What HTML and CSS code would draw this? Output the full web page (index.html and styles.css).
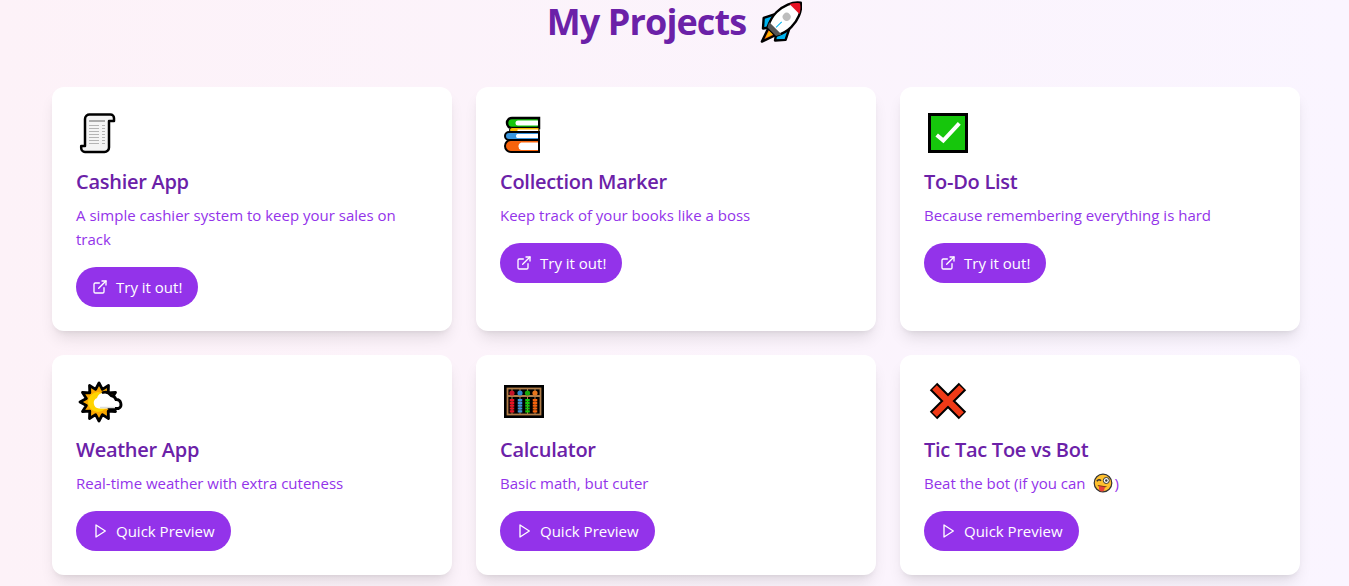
FILE: index.html
```html
<!DOCTYPE html>
<html lang="en">
<head>
    <meta charset="UTF-8">
    <meta name="viewport" content="width=device-width, initial-scale=1.0">
    <title>My Projects</title>
    <link rel="stylesheet" href="styles.css">
</head>
<body>
    <h1 class="page-title">My Projects
        <svg class="title-emoji" viewBox="0 0 44 44" aria-hidden="true">
            <g transform="translate(23 22.500) rotate(45)" stroke="#000" stroke-width="2.4" stroke-linejoin="round">
                <path d="M-5 13 L0 27 L5 13Z" fill="#f7630c"/>
                <path d="M-2.500 14 L0 22 L2.500 14Z" fill="#fcb900" stroke="none"/>
                <path d="M-9 -4 L-15.500 9 L-8.500 17 L-5 12Z" fill="#00b4ef"/>
                <path d="M9 -4 L15.500 9 L8.500 17 L5 12Z" fill="#00b4ef"/>
                <path d="M0 -28 C7 -23 10.500 -13 10.500 -4 C10.500 3 8 9 6 13 H-6 C-8 9 -10.500 3 -10.500 -4 C-10.500 -13 -7 -23 0 -28Z" fill="#fff"/>
                <path d="M0 -27 C3 -25 5.500 -22 7 -19 H-7 C-5.500 -22 -3 -25 0 -27Z" fill="#e81224" stroke="none"/>
                <path d="M-6 13 C-7 11 -8 10 -8.500 8 H8.500 C8 10 7 11 6 13Z" fill="#555" stroke="none"/>
                <path d="M0 -1V7" stroke="#00b4ef" stroke-width="1"/>
                <circle cx="0" cy="-8" r="4" fill="#bdbdbd" stroke="none"/>
            </g>
        </svg>
    </h1>

    <div class="project-grid">
        <div class="project-card">
            <svg class="project-icon" viewBox="0 0 48 44" aria-hidden="true">
                <path d="M14 3.500H34.500A3.500 3.500 0 0 1 38 7V10H33V36.500A4.500 4.500 0 0 1 28.500 41H9A4 4 0 0 1 5.200 37V35H9V8A4.500 4.500 0 0 1 14 3.500Z" fill="#f4f4f4" stroke="#000" stroke-width="2.500" stroke-linejoin="round"/>
                <path d="M13 10H29" stroke="#ababab" stroke-width="2"/>
                <path d="M13 14.500H23M26 14.500H29M13 17.500H23M26 17.500H29M13 20.500H23M26 20.500H29M13 23.500H23M26 23.500H29M13 26.500H23M26 26.500H29M13 29.500H23M26 29.500H29M13 32.500H23M26 32.500H29" stroke="#b4b4b4" stroke-width="1.200"/>
            </svg>
            <h2 class="project-name">Cashier App</h2>
            <p class="project-desc">A simple cashier system to keep your sales on track</p>
            <a href="#" class="project-btn">
                <svg viewBox="0 0 24 24"><path d="M15 3h6v6"/><path d="M10 14 21 3"/><path d="M18 13v6a2 2 0 0 1-2 2H5a2 2 0 0 1-2-2V8a2 2 0 0 1 2-2h6"/></svg>
                Try it out!
            </a>
        </div>

        <div class="project-card">
            <svg class="project-icon" viewBox="0 0 48 44" aria-hidden="true">
                <path d="M39 17H12A5 5 0 0 1 12 7H39Z" fill="#16c60c" stroke="#000" stroke-width="2.500"/>
                <path d="M39 21.500H12A2.500 2.500 0 0 1 12 16.500H39Z" fill="#fcb900" stroke="#000" stroke-width="1"/>
                <path d="M39 29H9A4 4 0 0 1 9 21H39Z" fill="#3a96dd" stroke="#000" stroke-width="2"/>
                <path d="M39 41H11A6 6 0 0 1 11 29H39Z" fill="#f7630c" stroke="#000" stroke-width="2"/>
                <path d="M38 14.500H18A2.500 2.500 0 0 1 18 9.500H38ZM38 20H18A.7.7 0 0 1 18 18.600H38ZM38 27H17A2.500 2.500 0 0 1 17 23H38ZM38 39H21A4 4 0 0 1 21 31.500H38Z" fill="#fff"/>
            </svg>
            <h2 class="project-name">Collection Marker</h2>
            <p class="project-desc">Keep track of your books like a boss</p>
            <a href="#" class="project-btn">
                <svg viewBox="0 0 24 24"><path d="M15 3h6v6"/><path d="M10 14 21 3"/><path d="M18 13v6a2 2 0 0 1-2 2H5a2 2 0 0 1-2-2V8a2 2 0 0 1 2-2h6"/></svg>
                Try it out!
            </a>
        </div>

        <div class="project-card">
            <svg class="project-icon" viewBox="0 0 48 44" aria-hidden="true">
                <rect x="5.500" y="3.500" width="37" height="37" fill="#16c60c" stroke="#000" stroke-width="3"/>
                <path d="M12.700 24L19.300 29.500L35.300 12.300" fill="none" stroke="#fff" stroke-width="4"/>
            </svg>
            <h2 class="project-name">To-Do List</h2>
            <p class="project-desc">Because remembering everything is hard</p>
            <a href="#" class="project-btn">
                <svg viewBox="0 0 24 24"><path d="M15 3h6v6"/><path d="M10 14 21 3"/><path d="M18 13v6a2 2 0 0 1-2 2H5a2 2 0 0 1-2-2V8a2 2 0 0 1 2-2h6"/></svg>
                Try it out!
            </a>
        </div>

        <div class="project-card">
            <svg class="project-icon" viewBox="0 0 48 44" aria-hidden="true">
                <polygon points="42,23 35.600,19.600 39.500,13.500 32.200,13.800 32.500,6.500 26.400,10.400 23,4 19.600,10.400 13.500,6.500 13.800,13.800 6.500,13.500 10.400,19.600 4,23 10.400,26.400 6.500,32.500 13.800,32.200 13.500,39.500 19.600,35.600 23,42 26.400,35.600 32.500,39.500 32.200,32.200 39.500,32.500 35.600,26.400" fill="#fba800" stroke="#000" stroke-width="2.800" stroke-linejoin="round"/>
                <circle cx="22" cy="23" r="10" fill="#ffd400"/>
                <path d="M23 29.500A5.500 5.500 0 0 1 21 19A7.500 7.500 0 0 1 34 16.500A5.500 5.500 0 0 1 39 21A4.200 4.200 0 0 1 41 29.500Z" fill="#fff"/>
                <path d="M27 13.500A7.500 7.500 0 0 1 35 16.500A6 6 0 0 1 40 20.500A4.800 4.800 0 0 1 42.500 29.500H33" fill="none" stroke="#000" stroke-width="2.800" stroke-linecap="round"/>
                <path d="M24 28.500H39" stroke="#dcdcdc" stroke-width="1.500"/>
            </svg>
            <h2 class="project-name">Weather App</h2>
            <p class="project-desc">Real-time weather with extra cuteness</p>
            <a href="#" class="project-btn">
                <svg viewBox="0 0 24 24"><polygon points="6 3 20 12 6 21 6 3"/></svg>
                Quick Preview
            </a>
        </div>

        <div class="project-card">
            <svg class="project-icon" viewBox="0 0 48 44" aria-hidden="true">
                <rect x="4" y="6" width="40" height="33" fill="#000"/>
                <rect x="7.500" y="9.500" width="33" height="26" fill="none" stroke="#b07c48" stroke-width="1.800"/>
                <path d="M7.500 17H40" stroke="#b07c48" stroke-width="1.800"/>
                <path d="M12 9V36M20 9V36M27.500 9V36M35 9V36" stroke="#b07c48"/>
                <circle cx="12" cy="14" r="2.600" fill="#c4132a"/>
                <circle cx="20" cy="14" r="2.600" fill="#2f86cc"/>
                <circle cx="27.500" cy="14" r="2.600" fill="#16a80c"/>
                <circle cx="35" cy="14" r="2.600" fill="#e8761c"/>
                <path d="M12 20V34" stroke="#e81224" stroke-width="4.500" stroke-dasharray="2.200 .6"/>
                <path d="M20 20V34" stroke="#3a96dd" stroke-width="4.500" stroke-dasharray="2.200 .6"/>
                <path d="M27.500 20V34" stroke="#16c60c" stroke-width="4.500" stroke-dasharray="2.200 .6"/>
                <path d="M35 20V34" stroke="#f7630c" stroke-width="4.500" stroke-dasharray="2.200 .6"/>
            </svg>
            <h2 class="project-name">Calculator</h2>
            <p class="project-desc">Basic math, but cuter</p>
            <a href="#" class="project-btn">
                <svg viewBox="0 0 24 24"><polygon points="6 3 20 12 6 21 6 3"/></svg>
                Quick Preview
            </a>
        </div>

        <div class="project-card">
            <svg class="project-icon" viewBox="0 0 48 44" aria-hidden="true">
                <path d="M9.500 7.500L38.500 36.500M38.500 7.500L9.500 36.500" stroke="#000" stroke-width="10.500"/>
                <path d="M10.500 8.500L37.500 35.500M37.500 8.500L10.500 35.500" stroke="#f03a17" stroke-width="6.500"/>
            </svg>
            <h2 class="project-name">Tic Tac Toe vs Bot</h2>
            <p class="project-desc">Beat the bot (if you can
                <svg class="inline-emoji" viewBox="0 0 20 20" aria-hidden="true">
                    <circle cx="10" cy="10" r="8.800" fill="#ffc02e" stroke="#333" stroke-width="1.200"/>
                    <path d="M3.800 8.200Q6 5.500 8 7.800" fill="none" stroke="#333" stroke-width="1.500"/>
                    <circle cx="13.300" cy="7.500" r="3" fill="#fff" stroke="#333"/>
                    <circle cx="13.300" cy="7.500" r="1.200" fill="#333"/>
                    <path d="M4.500 12L14 13.500C12 15 6 15 4.500 12Z" fill="#6b3410"/>
                    <path d="M6 13L12 14L11 17.500A2.800 2.800 0 0 1 6 16Z" fill="#e8413a"/>
                </svg>)</p>
            <a href="#" class="project-btn">
                <svg viewBox="0 0 24 24"><polygon points="6 3 20 12 6 21 6 3"/></svg>
                Quick Preview
            </a>
        </div>
    </div>
</body>
</html>
```

FILE: styles.css
```css
body {
    margin: 0;
    padding: 0 49px 11px 52px;
    font-family: "Open Sans", "Noto Sans", sans-serif;
    background: linear-gradient(to right, #fdf2f8, #faf5ff);
    min-height: 100vh;
    box-sizing: border-box;
}

.page-title {
    margin: 0 0 45px;
    height: 40px;
    padding: 2px 3px 0 0;
    display: flex;
    justify-content: center;
    align-items: center;
    gap: 12px;
    font-size: 36px;
    line-height: 40px;
    font-weight: 700;
    letter-spacing: -0.9px;
    color: #6b21a8;
}

.title-emoji {
    width: 44px;
    height: 44px;
    flex: none;
}

.project-grid {
    display: grid;
    grid-template-columns: repeat(3, 1fr);
    gap: 24px;
}

.project-card {
    background-color: #fff;
    border-radius: 12px;
    padding: 24px;
    box-shadow: 0 10px 15px -3px rgba(0, 0, 0, 0.1), 0 4px 6px -4px rgba(0, 0, 0, 0.1);
}

.project-icon {
    display: block;
    width: 48px;
    height: 44px;
    margin-bottom: 13px;
}

.project-name {
    margin: 0 0 7px;
    font-size: 20px;
    line-height: 28px;
    font-weight: 600;
    letter-spacing: -0.27px;
    color: #6b21a8;
}

.project-desc {
    margin: 0 0 16px;
    font-size: 15px;
    line-height: 24px;
    color: #9333ea;
}

.inline-emoji {
    width: 20px;
    height: 20px;
    margin: 0 1px 0 4px;
    vertical-align: -4px;
}

.project-btn {
    display: inline-flex;
    align-items: center;
    gap: 8px;
    height: 40px;
    padding: 0 16px;
    border-radius: 20px;
    background-color: #9333ea;
    color: #fff;
    font-size: 15px;
    text-decoration: none;
}

.project-btn svg {
    width: 16px;
    height: 16px;
    fill: none;
    stroke: #fff;
    stroke-width: 2;
    stroke-linecap: round;
    stroke-linejoin: round;
}
```
